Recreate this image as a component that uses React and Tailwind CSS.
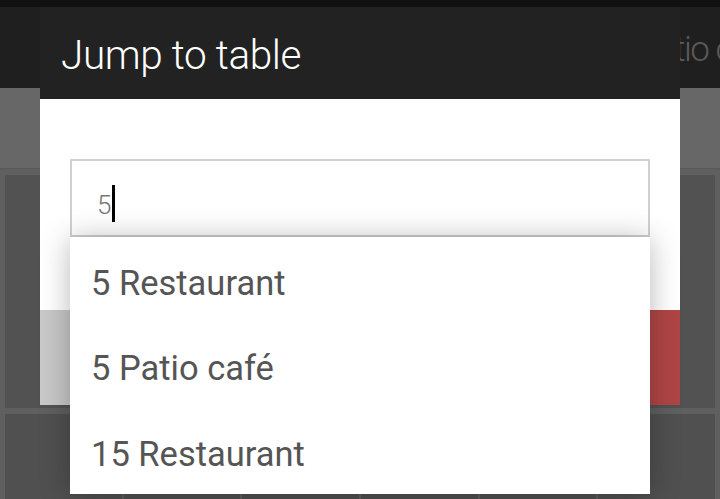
import React from 'react';

const font = { fontFamily: 'Roboto, "Noto Sans", sans-serif' };

const results = ['5 Restaurant', '5 Patio café', '15 Restaurant'];

const App = () => {
    return (
        <div className="relative w-[720px] h-[499px] overflow-hidden bg-[#5f5f5f]" style={font}>
            {/* dimmed app behind the dialog */}
            <div className="h-[7px] bg-[#111111]" />
            <div className="h-[81px] bg-[#1f1f1f] flex items-center overflow-hidden">
                <span className="ml-[637px] mt-[4px] whitespace-nowrap text-[35px] font-light tracking-[-1.5px] text-[#5a5a5a] leading-none">
                    Patio café
                </span>
            </div>
            <div className="h-[81px] bg-[#676767] border-b border-[#595959]" />
            <div className="flex flex-col gap-[6px] p-[5px] pt-[6px]">
                <div className="grid grid-cols-2 gap-[6px] h-[233px]">
                    <div className="bg-[#525252]" />
                    <div className="bg-[#525252]" />
                </div>
                <div className="grid grid-cols-6 gap-[2px] h-[90px]">
                    <div className="bg-[#505050]" />
                    <div className="bg-[#505050]" />
                    <div className="bg-[#505050]" />
                    <div className="bg-[#505050]" />
                    <div className="bg-[#505050]" />
                    <div className="bg-[#505050]" />
                </div>
            </div>

            {/* dialog */}
            <div className="absolute left-[40px] top-[7px] w-[640px] flex flex-col">
                <div className="h-[92px] bg-[#222222] flex items-center px-[21px]">
                    <h1 className="mt-[4px] text-[40.5px] font-light text-white leading-none tracking-[-0.4px]">Jump to table</h1>
                </div>
                <div className="h-[211px] bg-white pt-[60px] px-[30px]">
                    <div className="h-[78px] border-2 border-[#d0d0d0] bg-white flex items-center pl-[25px]">
                        <span className="mt-[13px] text-[26px] font-light text-[#777777] leading-none">5</span>
                        <span className="mt-[11px] w-[3px] h-[37px] bg-black ml-[1px]" />
                    </div>
                </div>
                <div className="h-[95px] flex">
                    <div className="flex-1 bg-gradient-to-r from-[#c9c9c9] to-[#b8b8b8]" />
                    <div className="flex-1 bg-[#b04545]" />
                </div>
            </div>

            {/* autocomplete dropdown */}
            <div className="absolute left-[70px] top-[237px] w-[580px] h-[257px] bg-white shadow-[0_2px_28px_rgba(0,0,0,0.28)] flex flex-col">
                {results.map((r) => (
                    <div key={r} className="h-[86px] flex items-center pl-[21px] pt-[6px] text-[34.5px] text-[#555555] leading-none">
                        {r}
                    </div>
                ))}
            </div>
        </div>
    );
};

export default App;
